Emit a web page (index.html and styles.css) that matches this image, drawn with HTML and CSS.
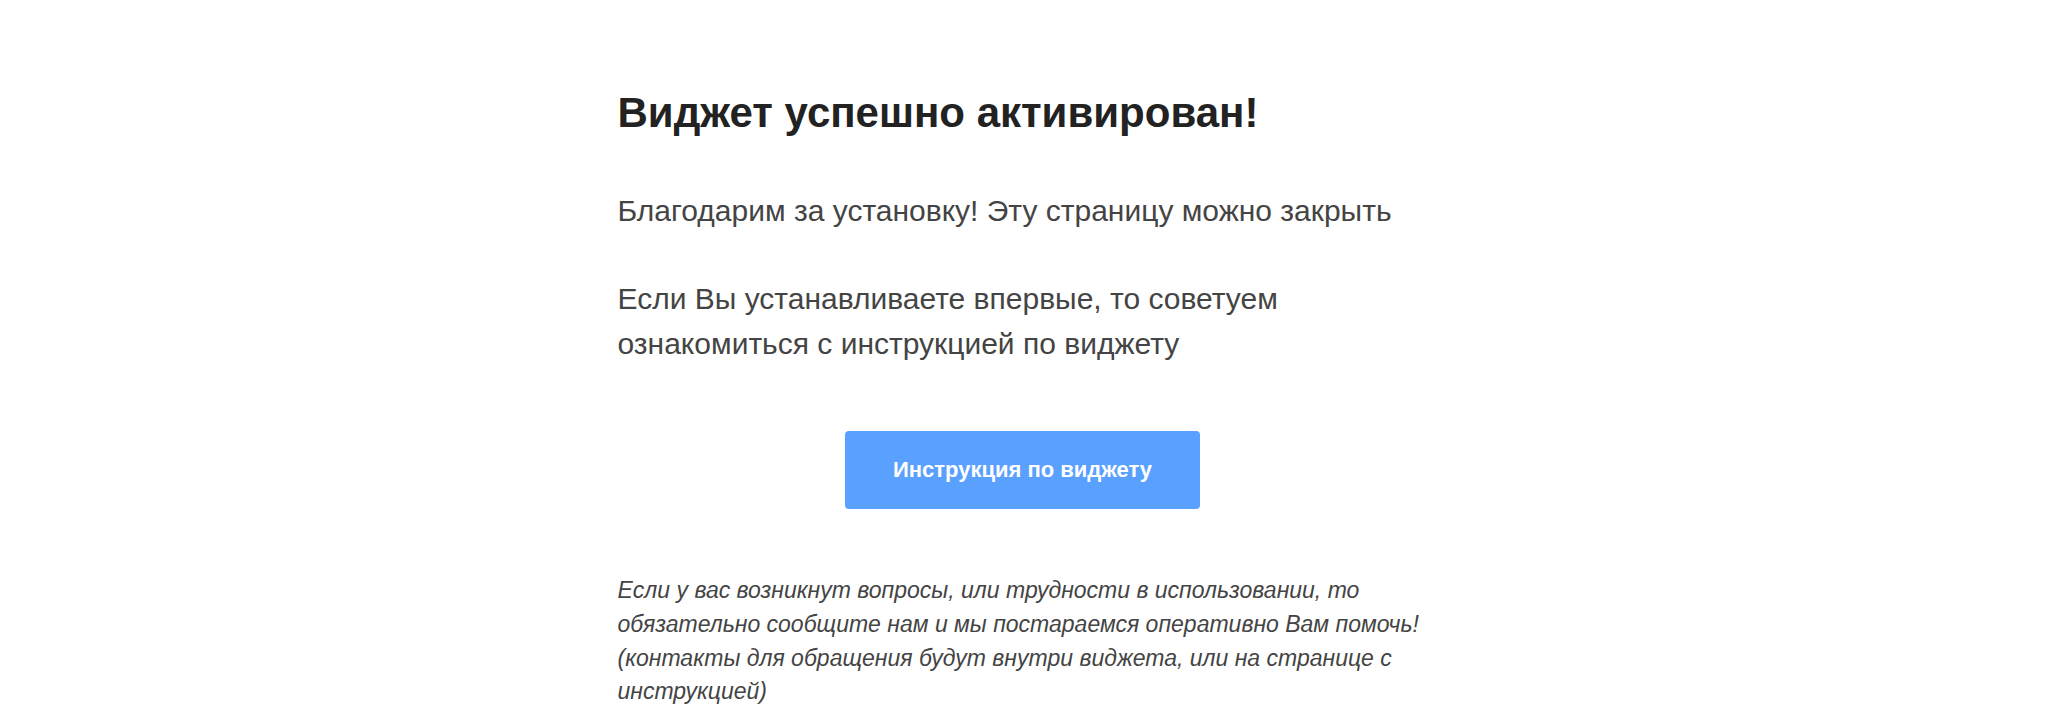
FILE: index.html
```html
<!DOCTYPE html>
<html lang="ru">
<head>
<meta charset="utf-8">
<title>Виджет успешно активирован!</title>
<link rel="stylesheet" href="styles.css">
</head>
<body>
<main class="wrap">
  <h1 class="title">Виджет успешно активирован!</h1>
  <p class="text text-first">Благодарим за установку! Эту страницу можно закрыть</p>
  <p class="text text-second">Если Вы устанавливаете впервые, то советуем ознакомиться с инструкцией по виджету</p>
  <div class="actions">
    <a class="btn" href="#">Инструкция по виджету</a>
  </div>
  <p class="note">Если у вас возникнут вопросы, или трудности в использовании, то обязательно сообщите нам и мы постараемся оперативно Вам помочь! (контакты для обращения будут внутри виджета, или на странице с инструкцией)</p>
</main>
</body>
</html>
```

FILE: styles.css
```css
html, body {
  margin: 0;
  padding: 0;
  background: #ffffff;
}

body {
  font-family: "Liberation Sans", Arial, sans-serif;
  color: #444444;
}

.wrap {
  width: 820px;
  margin: 0 auto;
  padding-top: 88px;
}

.title {
  margin: 0;
  font-size: 42px;
  line-height: 1.2;
  font-weight: bold;
  color: #222222;
}

.text {
  margin: 0;
  font-size: 30px;
  line-height: 1.5;
  color: #444444;
}

.text-first {
  margin-top: 50px;
}

.text-second {
  margin-top: 43px;
}

.actions {
  display: flex;
  justify-content: center;
  padding-right: 10px;
  margin-top: 65px;
}

.btn {
  display: flex;
  align-items: center;
  justify-content: center;
  width: 355px;
  height: 78px;
  box-sizing: border-box;
  background: #5aa0ff;
  border-radius: 4px;
  color: #ffffff;
  font-size: 22px;
  font-weight: bold;
  text-decoration: none;
}

.note {
  margin: 65px 0 0;
  font-size: 23px;
  font-style: italic;
  line-height: 1.46;
  color: #444444;
}
```
